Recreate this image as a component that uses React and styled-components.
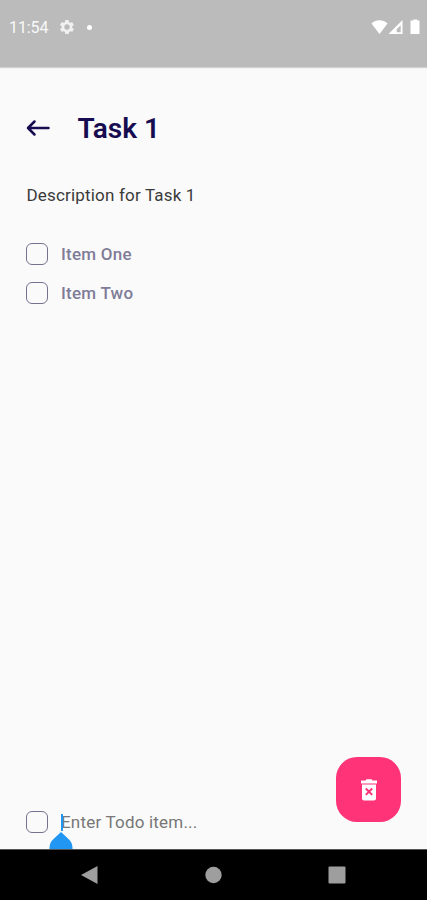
import React from 'react';
import styled, { createGlobalStyle } from 'styled-components';

const colours = {
  primary: '#170c50',
  item: '#807c98',
  accent: '#ff3377',
  cursor: '#2196f3',
  page: '#fafafa',
};

const GlobalStyle = createGlobalStyle`
    * {
        box-sizing: border-box;
    }

    body {
        margin: 0;
        font-family: Roboto, sans-serif;
        background: ${colours.page};
    }
`;

const Screen = styled.div`
    display: flex;
    flex-direction: column;
    height: 900px;
    width: 427px;
    overflow: hidden;
    background: ${colours.page};
`;

const StatusBar = styled.header`
    display: flex;
    align-items: flex-start;
    flex: none;
    height: 67px;
    padding: 18px 7px 0 9px;
    background: #bbb;
    box-shadow: 0 1px 1px rgba(0, 0, 0, .16);
    color: #fff;

    svg {
        display: block;
        flex: none;
    }
`;

const Clock = styled.span`
    width: 50px;
    font-size: 16px;
    line-height: 20px;
    letter-spacing: -.1px;
    opacity: .92;
`;

const Gear = styled.svg`
    margin: 2px 1px 0;
`;

const Dot = styled.span`
    width: 5px;
    height: 5px;
    margin: 7px 0 0 12px;
    border-radius: 50%;
    background: #fff;
`;

const StatusIcons = styled.div`
    display: flex;
    margin-left: auto;
    padding-top: 1px;
`;

const Main = styled.main`
    display: flex;
    flex-direction: column;
    flex: 1;
    min-height: 0;
    padding: 43px 26px 0;
    overflow: hidden;
`;

const TitleRow = styled.div`
    display: flex;
    align-items: center;
    height: 36px;
`;

const BackButton = styled.button`
    display: block;
    width: 24px;
    height: 24px;
    margin: 0 27.5px 0 0;
    padding: 0;
    border: none;
    background: transparent;
    color: ${colours.primary};
`;

const Title = styled.h1`
    margin: 1px 0 0;
    font-size: 28px;
    font-weight: 600;
    line-height: 36px;
    color: ${colours.primary};
`;

const Description = styled.p`
    margin: 38px 0 0;
    padding-left: .5px;
    font-size: 17px;
    line-height: 22px;
    letter-spacing: .18px;
    color: #3a3a3a;
`;

const TodoList = styled.div`
    display: flex;
    flex-direction: column;
    gap: 17px;
    margin-top: 37px;
`;

const TodoRow = styled.label`
    display: flex;
    align-items: center;
    height: 22px;
`;

const CheckBox = styled.span`
    flex: none;
    width: 22px;
    height: 22px;
    margin-right: 13px;
    border: 1px solid #77718f;
    border-radius: 6px;
`;

const TodoText = styled.span`
    font-size: 17px;
    font-weight: 500;
    line-height: 22px;
    letter-spacing: .24px;
    color: ${colours.item};
`;

const Footer = styled.div`
    display: flex;
    align-items: flex-end;
    justify-content: space-between;
    margin-top: auto;
    padding-bottom: 16px;
`;

const Field = styled.span`
    position: relative;
    font-size: 17px;
    line-height: 22px;
    letter-spacing: .2px;
    color: #777;
`;

const Caret = styled.span`
    position: absolute;
    left: 0;
    top: 3px;
    width: 2px;
    height: 17px;
    background: ${colours.cursor};
`;

const Handle = styled.svg`
    position: absolute;
    left: -13px;
    top: 21px;
`;

const DeleteButton = styled.button`
    display: flex;
    align-items: center;
    justify-content: center;
    width: 65px;
    height: 65px;
    margin-bottom: 11px;
    padding: 0;
    border: none;
    border-radius: 21px;
    background: ${colours.accent};
`;

const NavBar = styled.nav`
    display: flex;
    align-items: center;
    justify-content: space-between;
    flex: none;
    height: 51px;
    padding: 0 81px 0 80px;
    border-top: 1px solid #555;
    background: #000;

    svg {
        display: block;
    }
`;

const items = ['Item One', 'Item Two'];

function GearIcon() {
  return (
    <Gear width="14" height="14" viewBox="2 2 20 20" fill="#f1f1f1">
      <path fillRule="evenodd" d="M19.4 13a7.5 7.5 0 0 0 0-2l2.1-1.6c.2-.2.3-.5.1-.7l-2-3.4c-.1-.2-.4-.3-.6-.2l-2.5 1a7.3 7.3 0 0 0-1.7-1L14.4 2.4A.5.5 0 0 0 13.9 2h-4a.5.5 0 0 0-.5.4L9 5.1a7.7 7.7 0 0 0-1.7 1l-2.5-1a.5.5 0 0 0-.6.2l-2 3.4a.5.5 0 0 0 .1.7L4.5 11a8 8 0 0 0 0 2l-2.1 1.6a.5.5 0 0 0-.1.7l2 3.4c.1.2.4.3.6.2l2.5-1a7.3 7.3 0 0 0 1.7 1l.4 2.7c0 .2.2.4.5.4h4c.2 0 .5-.2.5-.4l.4-2.7a7.7 7.7 0 0 0 1.7-1l2.5 1c.2.1.5 0 .6-.2l2-3.4a.5.5 0 0 0-.1-.7zM12 15.8a3.8 3.8 0 1 1 0-7.6 3.8 3.8 0 0 1 0 7.6z" />
    </Gear>
  );
}

export default function App() {
  return (
    <>
      <GlobalStyle />
      <Screen>
        <StatusBar>
          <Clock>11:54</Clock>
          <GearIcon />
          <Dot />
          <StatusIcons>
            <svg width="49" height="16" viewBox="0 0 49 16" fill="#fff">
              <path d="M.5 4.5C5 .3 12 .3 16.5 4.5L8.5 15z" />
              <path fillRule="evenodd" d="M31.5 1v14H17.5zM29.7 6.300l-4 4v3h4z" />
              <path d="M40.500 1.600h1.800V.5h4v1.1h1.700q.5 0 .5.5v12.400q0 .5-.5.5h-8q-.5 0-.5-.5V2.100q0-.5.5-.5z" />
            </svg>
          </StatusIcons>
        </StatusBar>
        <Main>
          <TitleRow>
            <BackButton aria-label="Back">
              <svg width="24" height="24" viewBox="0 0 24 24" fill="none" stroke="currentColor" strokeWidth="2.5" strokeLinecap="round" strokeLinejoin="round">
                <path d="M22.5 12H2M8.500 5.500L2 12L8.500 18.500" />
              </svg>
            </BackButton>
            <Title>Task 1</Title>
          </TitleRow>
          <Description>Description for Task 1</Description>
          <TodoList>
            {items.map(item => (
              <TodoRow key={item}>
                <CheckBox />
                <TodoText>{item}</TodoText>
              </TodoRow>
            ))}
          </TodoList>
          <Footer>
            <TodoRow>
              <CheckBox />
              <Field>
                Enter Todo item...
                <Caret />
                <Handle width="26" height="24" viewBox="0 0 26 24" fill={colours.cursor}>
                  <path d="M13 0l8 7.5A11.5 11.5 0 1 1 5 7.5z" />
                </Handle>
              </Field>
            </TodoRow>
            <DeleteButton aria-label="Delete task">
              <svg width="18" height="22" viewBox="0 0 18 22">
                <path d="M1 1.5h4.5L6.5.3h5l1 1.2H17v3H1z" fill="#fff" />
                <path d="M2 5.5h14V19.5a2 2 0 0 1-2 2H4a2 2 0 0 1-2-2z" fill="#fff" />
                <path d="M5.8 9.5l6.4 6.4M12.2 9.5l-6.4 6.4" stroke={colours.accent} strokeWidth="2" />
              </svg>
            </DeleteButton>
          </Footer>
        </Main>
        <NavBar>
          <svg width="18" height="20" viewBox="0 0 18 20" fill="#9e9e9e">
            <path d="M17.5 1v18L1 10z" />
          </svg>
          <svg width="18" height="18" viewBox="0 0 18 18" fill="#9e9e9e">
            <circle cx="9.5" cy="9" r="8.2" />
          </svg>
          <svg width="18" height="18" viewBox="0 0 18 18" fill="#9e9e9e">
            <rect x=".5" y=".5" width="17" height="17" rx="1" />
          </svg>
        </NavBar>
      </Screen>
    </>
  );
}
